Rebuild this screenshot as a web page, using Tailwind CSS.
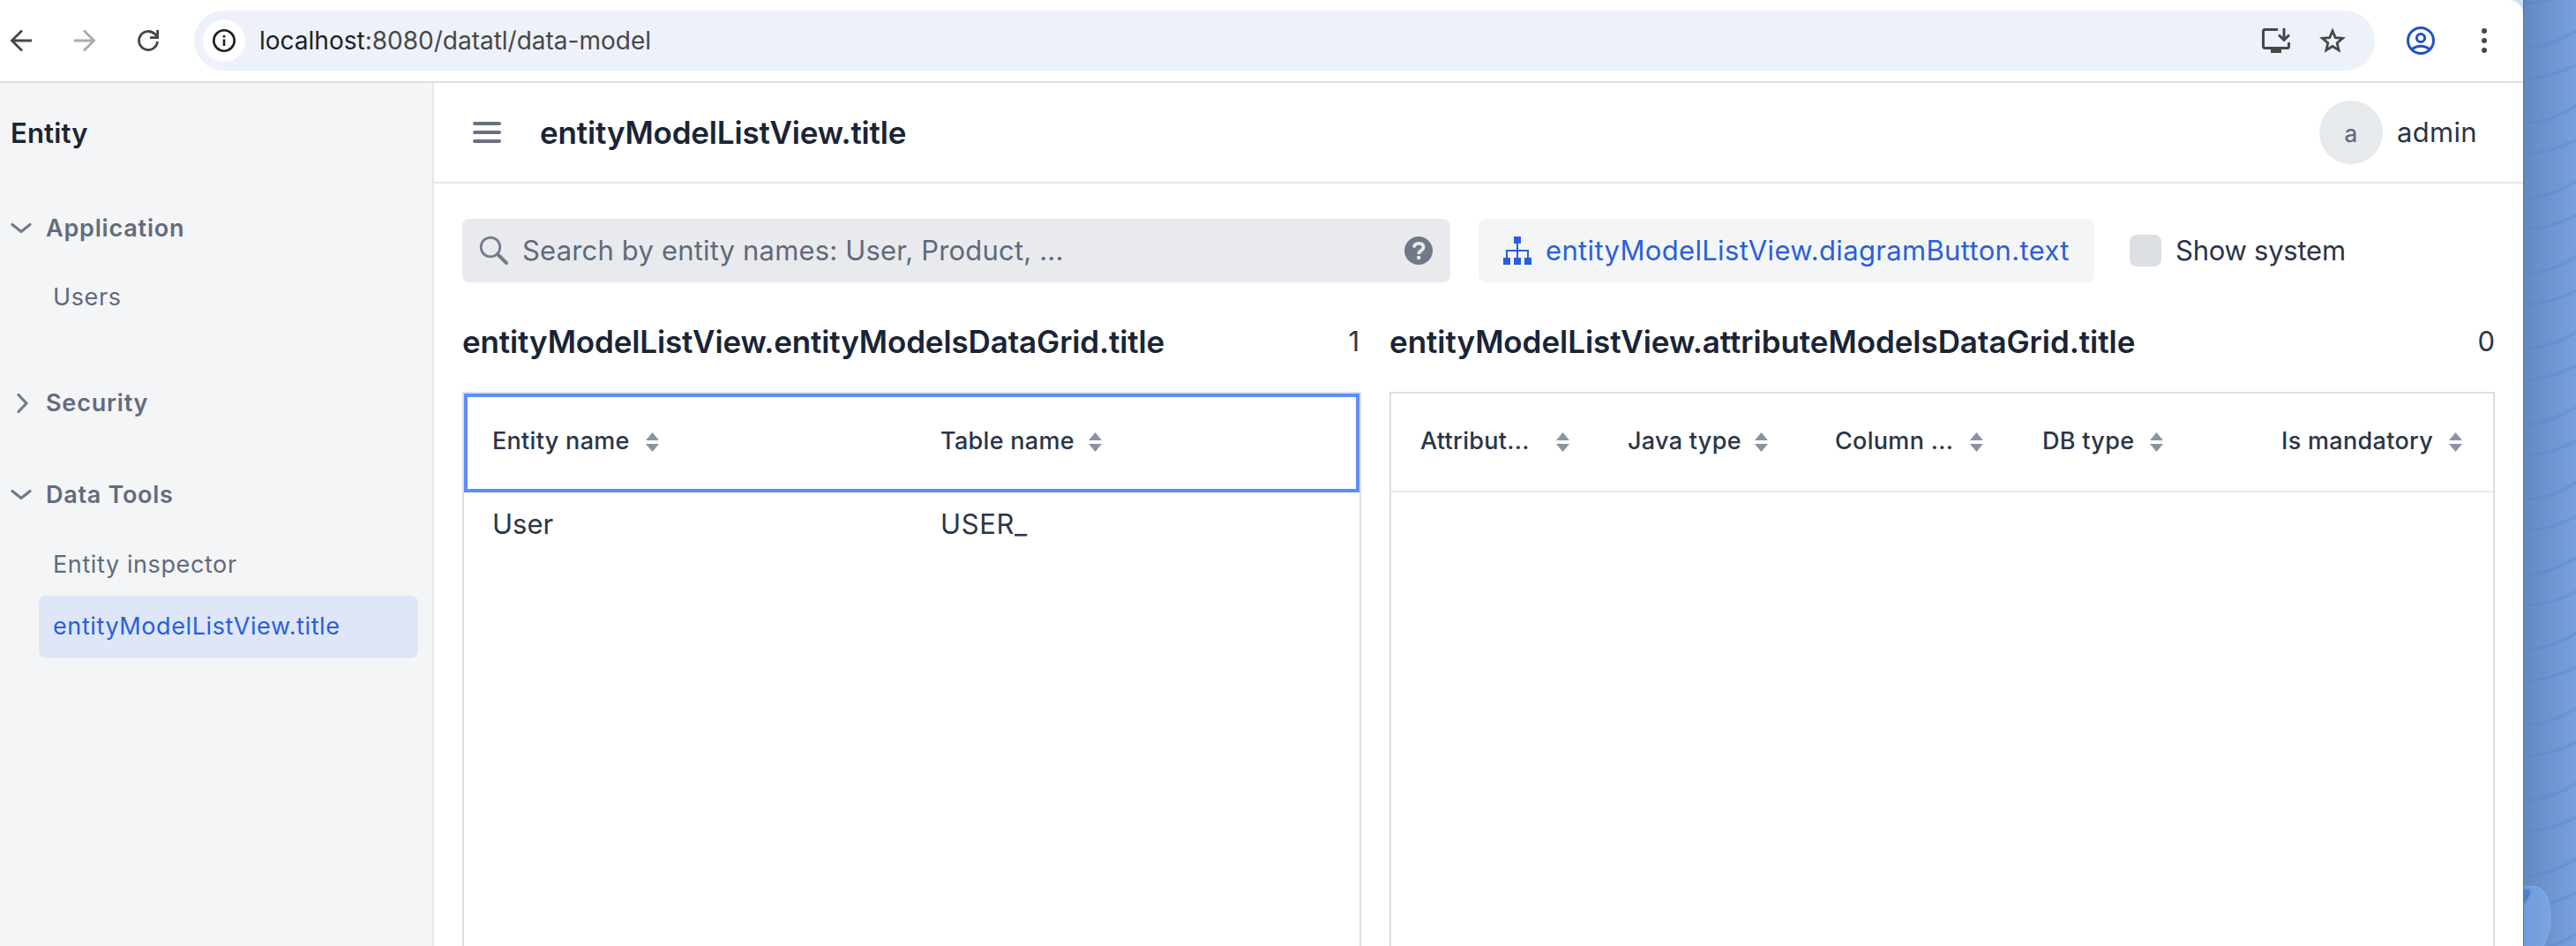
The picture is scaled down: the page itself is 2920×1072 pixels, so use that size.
<!DOCTYPE html>
<html lang="en">
<head>
<meta charset="utf-8">
<title>entityModelListView.title</title>
<script src="https://cdn.jsdelivr.net/npm/@tailwindcss/browser@4"></script>
</head>
<body class="w-[2920px] h-[1072px] overflow-hidden bg-[#cfdffb] font-[Inter,sans-serif] text-[#2a3548]">
<svg class="hidden">
  <symbol id="sort" viewBox="0 0 15 22"><path fill="#8a93a4" d="M7.500 0 15 9H0zM7.500 22 0 13h15z"/></symbol>
  <symbol id="down" viewBox="0 0 24 14"><path d="M2 2.500 12 10.500 22 2.500" fill="none" stroke="#717b8c" stroke-width="3.200" stroke-linecap="round" stroke-linejoin="round"/></symbol>
</svg>
<div class="flex w-[2920px] h-[1072px]">
  <div class="flex flex-col w-[2860px] h-full bg-white rounded-tr-[16px] overflow-hidden">
    <div class="flex items-center h-[94px] shrink-0 border-b-2 border-[#dedfe1]">
      <svg class="ml-[10px] w-[28px] h-[28px]" viewBox="0 0 28 28" fill="none" stroke="#474747" stroke-width="2.800"><path d="M26 14H4M15 2.500 3.500 14 15 25.500"/></svg>
      <svg class="ml-[44px] w-[28px] h-[28px]" viewBox="0 0 28 28" fill="none" stroke="#ababab" stroke-width="2.800"><path d="M2 14h22M13 2.500 24.500 14 13 25.500"/></svg>
      <svg class="ml-[44px] w-[28px] h-[28px]" viewBox="0 0 28 28" fill="none" stroke="#474747" stroke-width="2.800"><path d="M24.500 15A10.500 10.500 0 1 1 21.500 6.600L24.500 9.600M24.600 2v8.600H16"/></svg>
      <div class="flex items-center ml-[38px] w-[2472px] h-[68px] rounded-full bg-[#edf1fa] pl-[10px] pr-[32px]">
        <div class="flex items-center justify-center w-12 h-12 rounded-full bg-white">
          <svg class="w-[28px] h-[28px]" viewBox="0 0 28 28"><circle cx="14" cy="14" r="11.700" fill="none" stroke="#1f1f1f" stroke-width="2.600"/><path d="M12.700 12.500h2.600v7.500h-2.600zM12.700 8h2.600v2.600h-2.600z" fill="#1f1f1f"/></svg>
        </div>
        <div class="ml-[16px] text-[28px] leading-[36px] text-[#474747] whitespace-nowrap"><span class="text-[#1f1f1f]">localhost</span>:8080/datatl/data-model</div>
        <svg class="ml-auto w-[34px] h-[30px]" viewBox="0 0 34 30" fill="none" stroke="#474747" stroke-width="3"><path d="M19 2.500H4.500Q2.500 2.500 2.500 4.500V21.500Q2.500 23.500 4.500 23.500H29.500Q31.500 23.500 31.500 21.500V17M26 1V14M20 8.500 26 14.500 32 8.500"/><path d="M11 24h12v5H11z" fill="#474747" stroke="none"/></svg>
        <svg class="ml-[31px] mb-[1px] w-[32px] h-[32px]" viewBox="0 0 32 32" fill="none" stroke="#474747" stroke-width="2.800"><path d="M16 5 19.200 12.600 27.500 13.300 21.200 18.700 23.100 26.800 16 22.500 8.900 26.800 10.800 18.700 4.500 13.300 12.800 12.600Z"/></svg>
      </div>
      <svg class="ml-[36px] w-[32px] h-[32px]" viewBox="0 0 32 32" fill="none" stroke="#2250c8" stroke-width="3"><circle cx="16" cy="16" r="14.500"/><circle cx="16" cy="13" r="4.600"/><path d="M5.500 26Q16 18.500 26.500 26"/></svg>
      <svg class="ml-[52px] w-[8px] h-[28px]" viewBox="0 0 8 28" fill="#474747"><circle cx="4" cy="3" r="3"/><circle cx="4" cy="14" r="3"/><circle cx="4" cy="25" r="3"/></svg>
    </div>
    <div class="flex flex-1 min-h-0">
      <aside class="w-[492px] shrink-0 bg-[#f4f5f7] border-r-2 border-[#e5e9ec]">
        <div class="mt-[37px] ml-[12px] text-[31px] leading-[40px] font-semibold tracking-[0.15px] text-[#1a2435] whitespace-nowrap">Entity</div>
        <div class="mt-[68px] flex items-center h-[40px] text-[27px] font-semibold tracking-[0.8px] text-[#626c7d]"><svg class="ml-[12px] mr-[16px] w-6 h-[14px]"><use href="#down"/></svg>Application</div>
        <div class="mt-[38px] ml-[60px] h-[40px] leading-[40px] text-[27px] tracking-[0.6px] text-[#5f6a7b]">Users</div>
        <div class="mt-[80px] flex items-center h-[40px] text-[27px] font-semibold tracking-[0.8px] text-[#626c7d]"><svg class="ml-[18px] mr-[20px] w-[14px] h-6" viewBox="0 0 14 24"><path d="M3 2.500 12 12 3 21.500" fill="none" stroke="#717b8c" stroke-width="3.200" stroke-linecap="round" stroke-linejoin="round"/></svg>Security</div>
        <div class="mt-[64px] flex items-center h-[40px] text-[27px] font-semibold tracking-[0.7px] text-[#626c7d]"><svg class="ml-[12px] mr-[16px] w-6 h-[14px]"><use href="#down"/></svg>Data Tools</div>
        <div class="mt-[39px] ml-[60px] h-[40px] leading-[40px] text-[27px] tracking-[0.6px] text-[#5f6a7b]">Entity inspector</div>
        <div class="mt-[15px] ml-[44px] w-[430px] h-[71px] pl-[16px] flex items-center rounded-lg bg-[#dee6f7] text-[27px] tracking-[0.6px] text-[#2a5fdb]">entityModelListView.title</div>
      </aside>
      <main class="flex flex-col flex-1 min-w-0">
        <header class="flex items-center h-[114px] shrink-0 border-b-2 border-[#e7eaed] pl-[44px] pr-[52px]">
          <svg class="w-[32px] h-[24px]" viewBox="0 0 32 24" stroke="#677083" stroke-width="4" stroke-linecap="round"><path d="M2 2h28M2 12h28M2 22h28"/></svg>
          <h1 class="ml-[44px] pt-[1px] text-[35px] tracking-[-0.17px] font-semibold text-[#1a2435]">entityModelListView.title</h1>
          <div class="ml-auto w-[72px] h-[72px] rounded-full bg-[#e7eaed] flex items-center justify-center pt-[2px] text-[26px] font-medium text-[#626c7d]">a</div>
          <div class="ml-[16px] w-[91px] pt-[1px] text-[31px] tracking-[0.3px] whitespace-nowrap">admin</div>
        </header>
        <div class="flex items-center mt-[40px] pl-[32px]">
          <div class="flex items-center w-[1120px] h-[72px] rounded-lg bg-[#e9eaee] pl-[19px] pr-[20px]">
            <svg class="w-[34px] h-[34px]" viewBox="0 0 34 34" fill="none" stroke="#717b8c" stroke-width="2.800"><circle cx="13" cy="13" r="10.800"/><path d="M21 21 31 31" stroke-width="4" stroke-linecap="round"/></svg>
            <div class="ml-[15px] pt-[1px] text-[31px] tracking-[0.18px] text-[#5f6a7b] whitespace-nowrap">Search by entity names: User, Product, ...</div>
            <svg class="ml-auto w-8 h-8" viewBox="0 0 32 32"><circle cx="16" cy="16" r="16" fill="#707989"/><path d="M11 12.500Q11 7.800 16.200 7.800 21.500 7.800 21.500 12 21.500 14.300 19 15.900 16.300 17.600 16.300 20" fill="none" stroke="#e9eaee" stroke-width="3.800"/><path d="M14.200 22h4v4h-4z" fill="#e9eaee"/></svg>
          </div>
          <div class="flex items-center ml-[32px] w-[698px] h-[72px] rounded-lg bg-[#f4f5f7] pl-[28px] text-[31px] tracking-[0.34px] text-[#2a5fdb] whitespace-nowrap">
            <svg class="w-8 h-8 mr-[16px]" viewBox="0 0 32 32" fill="#2a5fdb"><path d="M12 0h8v8h-8zM0 24h8v8H0zM12 24h8v8h-8zM24 24h8v8h-8z"/><path d="M4 24v-8h24V24M16 8v16" fill="none" stroke="#2a5fdb" stroke-width="2"/></svg>
            <span class="pt-[1px]">entityModelListView.diagramButton.text</span>
          </div>
          <div class="ml-[40px] w-9 h-9 rounded-lg bg-[#dce0e5]"></div>
          <div class="ml-[16px] pt-[1px] text-[31px] tracking-[-0.25px] whitespace-nowrap">Show system</div>
        </div>
        <div class="flex flex-1 min-h-0 pl-[32px] gap-[32px] mt-[37px]">
          <section class="flex flex-col w-[1019px] shrink-0">
            <div class="flex items-center h-[60px]"><h2 class="text-[35px] tracking-[-0.13px] font-semibold text-[#1a2435]">entityModelListView.entityModelsDataGrid.title</h2><span class="ml-auto pr-[2px] text-[31px]">1</span></div>
            <div class="mt-[27px] flex-1 border-2 border-b-0 border-[#dcdfe6]">
              <div class="flex items-center h-[112px] border-4 border-[#5f8df8] pl-[28px] pb-[3px] text-[27px] tracking-[0.3px] font-medium whitespace-nowrap">
                <div class="w-[508px] flex items-center"><span class="w-[174px]">Entity name</span><svg class="w-[15px] h-[22px]"><use href="#sort"/></svg></div>
                <div class="flex items-center"><span class="w-[168px]">Table name</span><svg class="w-[15px] h-[22px]"><use href="#sort"/></svg></div>
              </div>
              <div class="flex items-center h-[72px] pl-[32px] text-[31px]"><div class="w-[508px]">User</div><div class="tracking-[0.6px]">USER_</div></div>
            </div>
          </section>
          <section class="flex flex-col w-[1253px] shrink-0">
            <div class="flex items-center h-[60px]"><h2 class="text-[35px] tracking-[-0.05px] font-semibold text-[#1a2435]">entityModelListView.attributeModelsDataGrid.title</h2><span class="ml-auto text-[31px]">0</span></div>
            <div class="mt-[27px] flex-1 border-2 border-b-0 border-[#dcdfe6]">
              <div class="flex items-center h-[112px] border-b-2 border-[#e7e9ee] pl-[33px] pr-[35px] pb-[1px] text-[27px] tracking-[0.3px] font-medium whitespace-nowrap">
                <div class="w-[235px] flex items-center"><span class="w-[154px]">Attribut...</span><svg class="w-[15px] h-[22px]"><use href="#sort"/></svg></div>
                <div class="w-[235px] flex items-center"><span class="w-[144px]">Java type</span><svg class="w-[15px] h-[22px]"><use href="#sort"/></svg></div>
                <div class="w-[235px] flex items-center"><span class="w-[153px]">Column ...</span><svg class="w-[15px] h-[22px]"><use href="#sort"/></svg></div>
                <div class="flex items-center"><span class="w-[122px]">DB type</span><svg class="w-[15px] h-[22px]"><use href="#sort"/></svg></div>
                <div class="ml-auto flex items-center gap-[18px]"><span>Is mandatory</span><svg class="w-[15px] h-[22px]"><use href="#sort"/></svg></div>
              </div>
            </div>
          </section>
        </div>
      </main>
    </div>
  </div>
  <div class="w-[60px] h-full overflow-hidden border-l border-[#4f72a8] bg-linear-to-r from-[#6389c1] via-[#6e95d0] to-[#78a0df]">
    <svg class="w-[60px] h-[1072px]" viewBox="0 0 60 1072">
      <defs>
        <pattern id="waves" width="60" height="85.300" y="15" patternUnits="userSpaceOnUse">
          <path d="M-2 39.700Q30 39 62 18M-2 74.500Q30 74 62 57" fill="none" stroke="#4f7fd0" stroke-opacity=".33" stroke-width="3.500"/>
        </pattern>
        <linearGradient id="drop" x1="0" y1="0" x2="1" y2="0"><stop offset="0" stop-color="#6f9cdc"/><stop offset="1" stop-color="#7ba4e1"/></linearGradient>
      </defs>
      <path d="M0 0h60v1072H0z" fill="url(#waves)"/>
      <path d="M-2 1004.500H12C24 1006 30 1022 30 1038 30 1052 26 1064 21 1074H-2z" fill="url(#drop)" stroke="#96b8ea" stroke-opacity=".5" stroke-width="1.500"/>
      <path d="M-2 1007Q8 1006 8 1011 8 1016 -2 1028z" fill="#4a80d0" stroke="#6f95cf" stroke-width="2"/>
    </svg>
  </div>
</div>
</body>
</html>
